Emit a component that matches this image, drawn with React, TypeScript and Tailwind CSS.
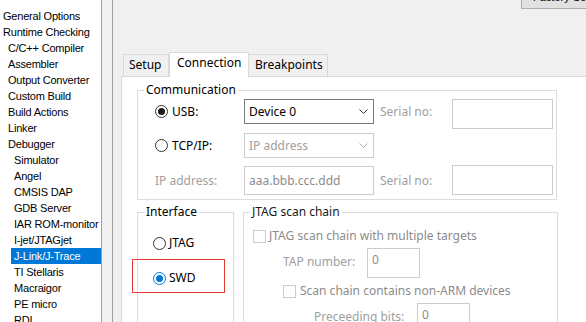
import React from 'react';

type Item = { label: string; level: 0 | 1 | 2; selected?: boolean };

const items: Item[] = [
  { label: 'General Options', level: 0 },
  { label: 'Runtime Checking', level: 0 },
  { label: 'C/C++ Compiler', level: 1 },
  { label: 'Assembler', level: 1 },
  { label: 'Output Converter', level: 1 },
  { label: 'Custom Build', level: 1 },
  { label: 'Build Actions', level: 1 },
  { label: 'Linker', level: 1 },
  { label: 'Debugger', level: 1 },
  { label: 'Simulator', level: 2 },
  { label: 'Angel', level: 2 },
  { label: 'CMSIS DAP', level: 2 },
  { label: 'GDB Server', level: 2 },
  { label: 'IAR ROM-monitor', level: 2 },
  { label: 'I-jet/JTAGjet', level: 2 },
  { label: 'J-Link/J-Trace', level: 2, selected: true },
  { label: 'TI Stellaris', level: 2 },
  { label: 'Macraigor', level: 2 },
  { label: 'PE micro', level: 2 },
  { label: 'RDI', level: 2 },
];

const indent = ['ml-0', 'ml-[5px]', 'ml-[11px]'];

const Radio = ({ checked, blue }: { checked?: boolean; blue?: boolean }) => (
  <span
    className={`w-[13px] h-[13px] shrink-0 rounded-full border bg-white flex items-center justify-center ${
      blue ? 'border-[#0078d7]' : 'border-[#333333]'
    }`}
  >
    {checked && <span className={`w-[7px] h-[7px] rounded-full ${blue ? 'bg-[#0078d7]' : 'bg-[#1a1a1a]'}`} />}
  </span>
);

const Checkbox = () => <span className="w-[13px] h-[13px] shrink-0 border border-[#cccccc] bg-white" />;

const Chevron = ({ color }: { color: string }) => (
  <svg width="9" height="5" viewBox="0 0 9 5">
    <path d="M0.5 0.5 L4.5 4.5 L8.5 0.5" stroke={color} fill="none" />
  </svg>
);

export default function App() {
  return (
    <div className="w-[586px] h-[322px] overflow-hidden flex bg-[#f0f0f0]">
      {/* options tree */}
      <div className="w-[102px] shrink-0 h-full bg-white border-r border-[#a0a0a0] pt-[8px] font-['Liberation_Sans'] text-[11px] leading-[16px] tracking-[-0.2px] text-black">
        {items.map(item => (
          <div
            key={item.label}
            className={`${indent[item.level]} pl-[3px] h-[16px] whitespace-nowrap overflow-hidden ${
              item.selected ? 'bg-[#0078d7] text-white' : ''
            }`}
          >
            {item.label}
          </div>
        ))}
      </div>

      <div className="w-[10px] shrink-0" />

      <div className="flex-1 min-w-0 border-l border-[#a0a0a0] pl-[8px] flex flex-col font-['Noto_Sans'] text-[12px] text-black">
        {/* top strip */}
        <div className="h-[52px] shrink-0 flex items-start overflow-hidden">
          <div className="ml-[400px] -mt-[14px] h-[23px] w-[90px] shrink-0 border border-[#adadad] bg-[#e1e1e1] pl-[11px] flex items-center whitespace-nowrap font-['Liberation_Sans'] text-[11px]">
            Factory Settings
          </div>
        </div>

        {/* tabs */}
        <div className="h-[24px] shrink-0 flex items-end pl-[2px] relative z-10">
          <div className="h-[22px] w-[46px] border border-b-0 border-[#d9d9d9] bg-[#f0f0f0] pl-[5px] leading-[20px]">Setup</div>
          <div className="h-[25px] w-[80px] -mb-px border border-b-0 border-[#d9d9d9] bg-white pl-[7px] leading-[20px]">Connection</div>
          <div className="h-[22px] w-[79px] border border-b-0 border-l-0 border-[#d9d9d9] bg-[#f0f0f0] pl-[6px] leading-[20px]">Breakpoints</div>
        </div>

        {/* panel */}
        <div className="flex-1 bg-white border-t border-l border-[#d9d9d9] pl-[15px] pt-[13px]">
          <div className="relative w-[420px] h-[110px] border border-[#dcdcdc] pl-[17px] pt-[8px]">
            <span className="absolute left-[6px] -top-[10px] px-[2px] bg-white leading-[18px]">Communication</span>

            <div className="flex items-start h-[30px]">
              <div className="w-[89px] h-[25px] flex items-center gap-[4px]">
                <Radio checked />
                <span>USB:</span>
              </div>
              <div className="w-[130px] h-[25px] border border-[#7a7a7a] flex items-center justify-between pl-[4px] pr-[5px]">
                <span>Device 0</span>
                <Chevron color="#333333" />
              </div>
              <div className="ml-[6px] w-[72px] h-[25px] flex items-center text-[#a0a0a0]">Serial no:</div>
              <div className="w-[101px] h-[30px] border border-[#cccccc]" />
            </div>

            <div className="mt-[4px] flex items-center h-[25px]">
              <div className="w-[89px] h-[25px] flex items-center gap-[4px]">
                <Radio />
                <span>TCP/IP:</span>
              </div>
              <div className="w-[130px] h-[25px] border border-[#cccccc] flex items-center justify-between pl-[4px] pr-[5px] text-[#a0a0a0]">
                <span>IP address</span>
                <Chevron color="#b0b0b0" />
              </div>
            </div>

            <div className="mt-[7px] flex items-start h-[30px]">
              <div className="w-[89px] h-[29px] mt-[1px] flex items-center text-[#a0a0a0]">IP address:</div>
              <div className="w-[130px] h-[29px] mt-[1px] border border-[#cccccc] pl-[4px] flex items-center text-[#8c8c8c]">
                aaa.bbb.ccc.ddd
              </div>
              <div className="ml-[6px] w-[72px] h-[29px] mt-[1px] flex items-center text-[#a0a0a0]">Serial no:</div>
              <div className="w-[101px] h-[30px] border border-[#cccccc]" />
            </div>
          </div>

          <div className="flex mt-[12px]">
            <div className="relative w-[97px] h-[130px] shrink-0 border border-[#dcdcdc] pl-[15px] pt-[21px]">
              <span className="absolute left-[6px] -top-[10px] px-[2px] bg-white leading-[18px]">Interface</span>
              <div className="flex items-center h-[18px] gap-[3px]">
                <Radio />
                <span>JTAG</span>
              </div>
              <div className="mt-[17px] flex items-center h-[18px] gap-[3px]">
                <Radio checked blue />
                <span>SWD</span>
              </div>
              <div className="absolute left-[-6px] top-[46px] w-[93px] h-[34px] border border-[#e53935]" />
            </div>

            <div className="relative ml-[9px] w-[315px] h-[130px] shrink-0 border border-[#dcdcdc] pl-[9px] pt-[14px]">
              <span className="absolute left-[6px] -top-[10px] px-[2px] bg-white leading-[18px] text-[#1a1a1a]">JTAG scan chain</span>
              <div className="flex items-center h-[18px] gap-[3px] text-[#8c8c8c]">
                <Checkbox />
                <span>JTAG scan chain with multiple targets</span>
              </div>
              <div className="mt-[3px] flex items-start h-[30px] pl-[30px]">
                <div className="w-[84px] h-[27px] flex items-center text-[#a0a0a0]">TAP number:</div>
                <div className="w-[53px] h-[30px] border border-[#cccccc] pl-[4px] pt-[2px] leading-[18px] text-[#8c8c8c]">0</div>
              </div>
              <div className="mt-[4px] flex items-center h-[18px] gap-[4px] pl-[30px] text-[#8c8c8c]">
                <Checkbox />
                <span>Scan chain contains non-ARM devices</span>
              </div>
              <div className="mt-[3px] flex items-start h-[30px] pl-[61px]">
                <div className="w-[103px] h-[28px] flex items-center text-[#a0a0a0]">Preceeding bits:</div>
                <div className="w-[53px] h-[30px] border border-[#cccccc] pl-[4px] pt-[2px] leading-[18px] text-[#8c8c8c]">0</div>
              </div>
            </div>
          </div>
        </div>
      </div>
    </div>
  );
}
